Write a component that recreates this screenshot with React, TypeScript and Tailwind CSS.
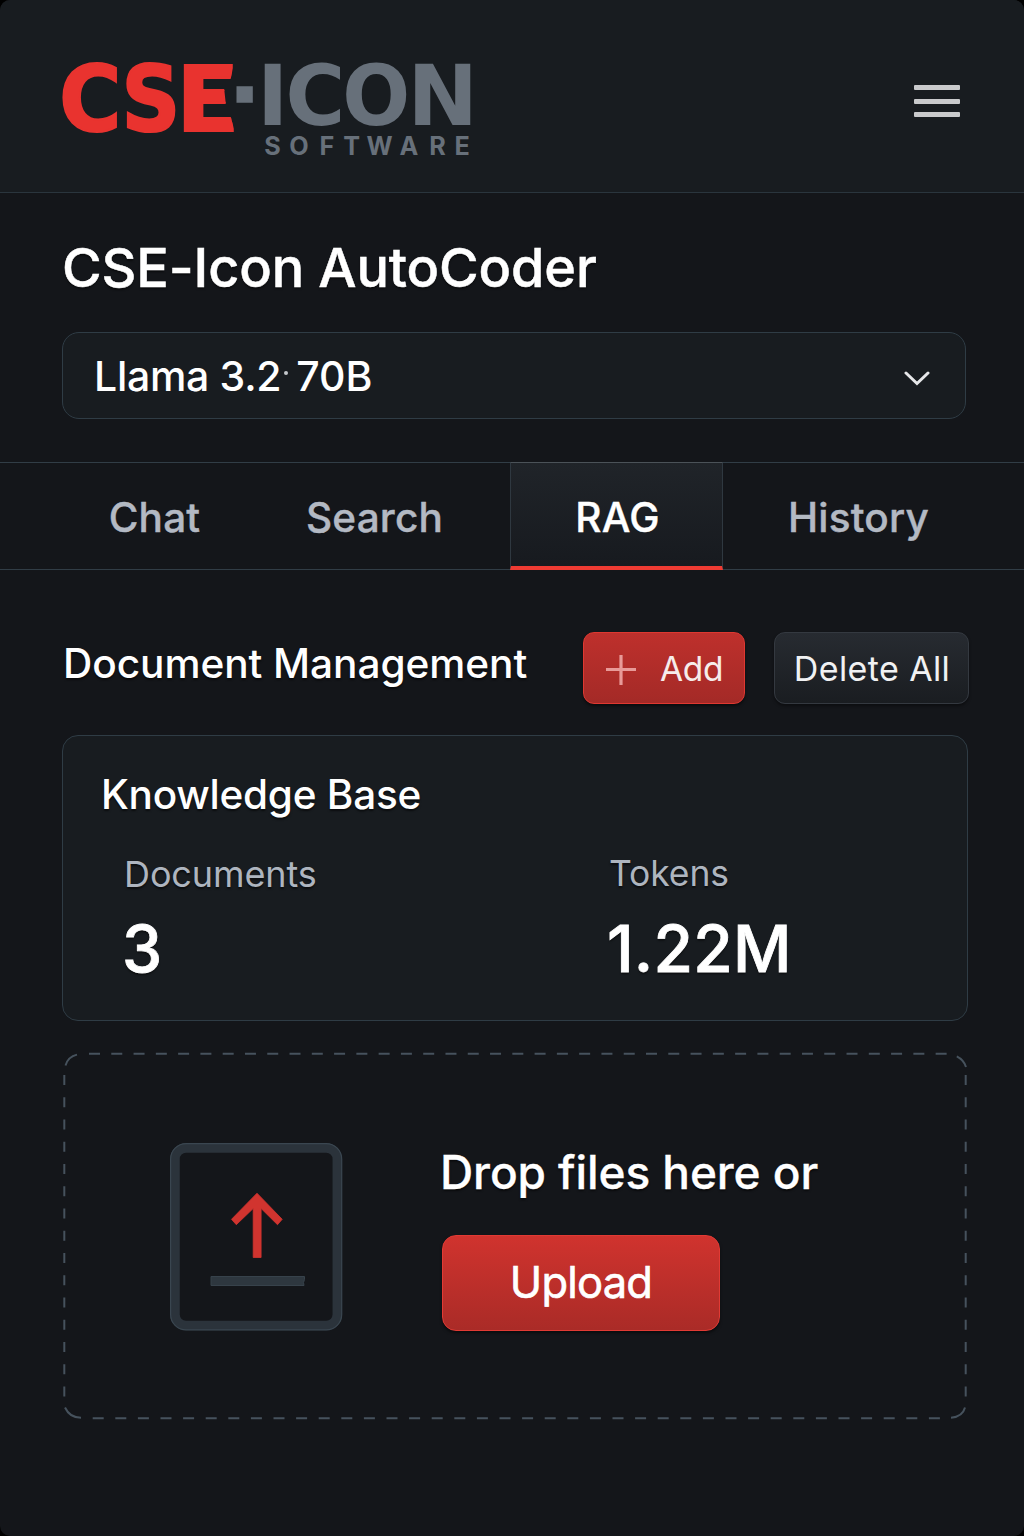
import type { ReactNode } from "react";

function Logo() {
  return (
    <svg
      className="block h-[104px] w-[420px] overflow-visible [text-shadow:none]"
      viewBox="56 56 420 104"
      role="img"
      aria-label="CSE-Icon Software"
    >
      <defs>
        <clipPath id="e-cut">
          <path d="M180 58H235.2L230.5 79.5H224V87L225.7 103V116H230.500L234.600 131V136H180Z" />
        </clipPath>
      </defs>
      <g fill="#e9332f" stroke="#e9332f" strokeWidth="2.2" fontFamily="DejaVu Sans" fontWeight="700" fontSize="91.2">
        <text transform="translate(59.2 130.6) scale(.927 1)">C</text>
        <text transform="translate(121.4 130.6) scale(.895 1)">S</text>
        <g clipPath="url(#e-cut)">
          <text transform="translate(176.6 130.6) scale(1.01 1)">E</text>
        </g>
      </g>
      <path d="M236.5 86.3h16.3v16.4h-16.3z" fill="#67707a" />
      <g fill="#67707a" fontFamily="DejaVu Sans" fontWeight="700" fontSize="84.2">
        <text transform="translate(257 124.7)">I</text>
        <text transform="translate(285.4 124.7) scale(.966 1)">C</text>
        <text transform="translate(342.3 124.7) scale(.95 1)">O</text>
        <text transform="translate(407.6 124.7)">N</text>
      </g>
      <text
        x="264.2 289.2 319.6 343.2 366.4 399.4 429.2 454.6"
        y="155"
        fill="#67707a"
        fontFamily="Inter"
        fontWeight="700"
        fontSize="25.2"
      >
        SOFTWARE
      </text>
    </svg>
  );
}

function Tab({ children, className }: { children: ReactNode; className: string }) {
  return (
    <button
      className={"flex h-full items-center justify-center text-[40.5px] font-medium leading-none tracking-[0.2px] [-webkit-text-stroke:0.4px_currentColor] " + className}
    >
      {children}
    </button>
  );
}

function DashedFrame() {
  return (
    <svg
      className="absolute inset-0 h-full w-full"
      viewBox="62 1052 906 368"
      fill="none"
      stroke="#46525d"
      strokeWidth="2"
    >
      <path d="M89 1053.7H947" strokeDasharray="11 11.28" />
      <path d="M92.7 1418.3H942" strokeDasharray="11 11.6" />
      <path d="M64.3 1075V1397" strokeDasharray="10 12.25" />
      <path d="M965.7 1075V1397" strokeDasharray="10 12.25" />
      <path d="M65.5 1065.5C67 1060 71 1056 77 1054.6" />
      <path d="M956.8 1056.4C961 1058.5 964.5 1062 966 1067" />
      <path d="M65 1407.5C68 1414 73 1417.8 81 1417.8" />
      <path d="M951 1417.8C959 1417 963.5 1413.5 965 1407.5" />
    </svg>
  );
}

function UploadIcon() {
  return (
    <svg className="h-[188px] w-[173px]" viewBox="170 1143 173 188" fill="none">
      <rect x="175" y="1148" width="162.3" height="177.5" rx="11" stroke="#2b333b" strokeWidth="9.5" />
      <rect x="170.6" y="1143.6" width="171.1" height="186.3" rx="15.5" stroke="#3a4650" strokeWidth="1.2" />
      <path d="M211 1276.500h93.5v3l-1 3 .5 3H211z" fill="#2e373f" stroke="#37424b" strokeWidth="1" />
      <path
        d="M257 1193.200L282.200 1219.300L277.500 1224.700L261.100 1208.500V1257.500H253.200V1208.500L236.300 1224.700L231.500 1219.300Z"
        fill="#d1342f"
        stroke="#d1342f"
        strokeWidth="0.8"
        strokeLinejoin="round"
      />
    </svg>
  );
}

export default function App() {
  return (
    <div className="h-[1536px] w-[1024px] overflow-hidden bg-black">
      <div className="flex h-full flex-col overflow-hidden rounded-[10px] bg-[#14161a] font-['Inter',sans-serif] text-white [text-shadow:0_2px_2px_rgba(0,0,0,0.55)]">
        <header className="flex h-[193px] shrink-0 justify-between border-b-[1.5px] border-[#2a353d] bg-[#181c20] pl-14 pr-16 pt-14">
          <Logo />
          <button aria-label="Menu" className="mt-[29px] flex h-[32px] w-[46px] flex-col justify-between">
            <span className="block h-[5px] w-full rounded-[1px] bg-[#c9cacc]" />
            <span className="block h-[5px] w-full rounded-[1px] bg-[#c9cacc]" />
            <span className="block h-[5px] w-full rounded-[1px] bg-[#c9cacc]" />
          </button>
        </header>

        <section className="flex h-[269px] shrink-0 flex-col px-[62px]">
          <h1 className="mt-[45px] h-[60px] whitespace-nowrap text-[54px] font-medium leading-[60px] tracking-[-0.12px] [-webkit-text-stroke:0.5px_currentColor]">
            CSE-Icon AutoCoder
          </h1>
          <button className="mt-[34px] flex h-[87px] w-[904px] items-center justify-between rounded-[17px] border border-[#2f3c45] bg-[#181c20] pl-[31px] pr-[35px]">
            <span className="mt-[2px] flex items-center text-[41px] font-medium leading-none">
              <span className="tracking-[-0.3px]">Llama 3.2</span>
              <span className="mb-[7px] ml-[3px] mr-[8px] h-[4px] w-[4px] rounded-full bg-[#c4c8cc]" />
              <span>70B</span>
            </span>
            <svg className="mt-1 h-[16px] w-[26px]" viewBox="0 0 26 16" fill="none">
              <path d="M2 3l11 10.500L24 3" stroke="#e6e7e9" strokeWidth="3" strokeLinecap="round" />
            </svg>
          </button>
        </section>

        <nav className="flex h-[108px] shrink-0 border-y border-[#313d46] text-[#b3b9c3]">
          <Tab className="ml-[62px] w-[185px] pt-[4px]">Chat</Tab>
          <Tab className="w-[255px] pt-[4px]">Search</Tab>
          <div className="-mt-px ml-[8px] flex h-[108px] w-[213px] flex-col border-x border-b-[4px] border-t border-x-[#2f3840] border-b-[#ef3b33] border-t-[#4b5258] bg-linear-to-b from-[#202429] to-[#171a1f] text-white">
            <Tab className="pl-[2px] pt-[8px]">RAG</Tab>
          </div>
          <Tab className="w-[271px] pt-[4px]">History</Tab>
        </nav>

        <main className="flex flex-col pl-[62px] pt-[62px]">
          <div className="flex h-[72px] items-start">
            <h2 className="mt-[2px] h-[60px] w-[521px] whitespace-nowrap pl-px text-[40.6px] font-medium leading-[60px] tracking-[-0.05px]">
              Document Management
            </h2>
            <button className="flex h-[72px] w-[162px] items-center rounded-[11px] border border-[#df3831] bg-linear-to-b from-[#be302c] to-[#a42a27] pl-[21px] text-[33.5px] leading-none shadow-[0_2px_3px_rgba(0,0,0,0.5)]">
              <svg className="mt-[3px] h-[32px] w-[32px]" viewBox="0 0 32 32" fill="none">
                <path d="M16 1v30M1 15.500h30" stroke="#e89a98" strokeWidth="3.2" />
              </svg>
              <span className="ml-[23px] mt-[3px] tracking-[-0.3px] text-[#f6eceb]">Add</span>
            </button>
            <button className="ml-[29px] flex h-[72px] w-[195px] items-center justify-center whitespace-nowrap rounded-[11px] border border-[#343940] bg-linear-to-b from-[#272b31] to-[#1a1d21] pl-px pt-px text-[34px] leading-none tracking-[0.4px] text-[#f1f2f3] shadow-[0_2px_3px_rgba(0,0,0,0.4)]">
              Delete All
            </button>
          </div>

          <section className="mt-[31px] flex h-[286px] w-[906px] flex-col rounded-[16px] border border-[#2f3c45] bg-[#181c20] pl-[38px]">
            <h3 className="mt-[34px] h-[50px] text-[40.5px] font-medium leading-[50px] tracking-[-0.25px]">
              Knowledge Base
            </h3>
            <div className="flex pl-[22px]">
              <div className="mt-[34px] w-[484px]">
                <div className="ml-px h-[40px] text-[36px] leading-[40px] tracking-[-0.1px] text-[#aeb5bf]">Documents</div>
                <div className="-ml-px mt-[15px] h-[80px] text-[64px] font-medium leading-[80px] [-webkit-text-stroke:0.8px_currentColor]">
                  3
                </div>
              </div>
              <div className="mt-[34px]">
                <div className="ml-[2px] h-[40px] text-[35.5px] leading-[40px] tracking-[-0.1px] text-[#aeb5bf]">Tokens</div>
                <div className="mt-[15px] h-[80px] text-[64px] font-medium leading-[80px] tracking-[0.3px] [-webkit-text-stroke:0.8px_currentColor]">
                  1.22M
                </div>
              </div>
            </div>
          </section>

          <section className="relative mt-[31px] flex h-[368px] w-[906px] pl-[108px] pt-[91px]">
            <DashedFrame />
            <UploadIcon />
            <div className="ml-[97px] flex flex-col">
              <p className="h-[58px] whitespace-nowrap text-[46px] font-medium leading-[58px] tracking-[-0.1px] [-webkit-text-stroke:0.3px_currentColor]">
                Drop files here or
              </p>
              <button className="ml-[2px] mt-[34px] flex h-[96px] w-[278px] items-center justify-center rounded-[14px] border border-[#e23a34] bg-linear-to-b from-[#d0332e] to-[#aa2b27] text-[43.5px] leading-none tracking-[-0.8px] shadow-[0_2px_3px_rgba(0,0,0,0.5)] [-webkit-text-stroke:0.6px_currentColor]">
                Upload
              </button>
            </div>
          </section>
        </main>
      </div>
    </div>
  );
}
